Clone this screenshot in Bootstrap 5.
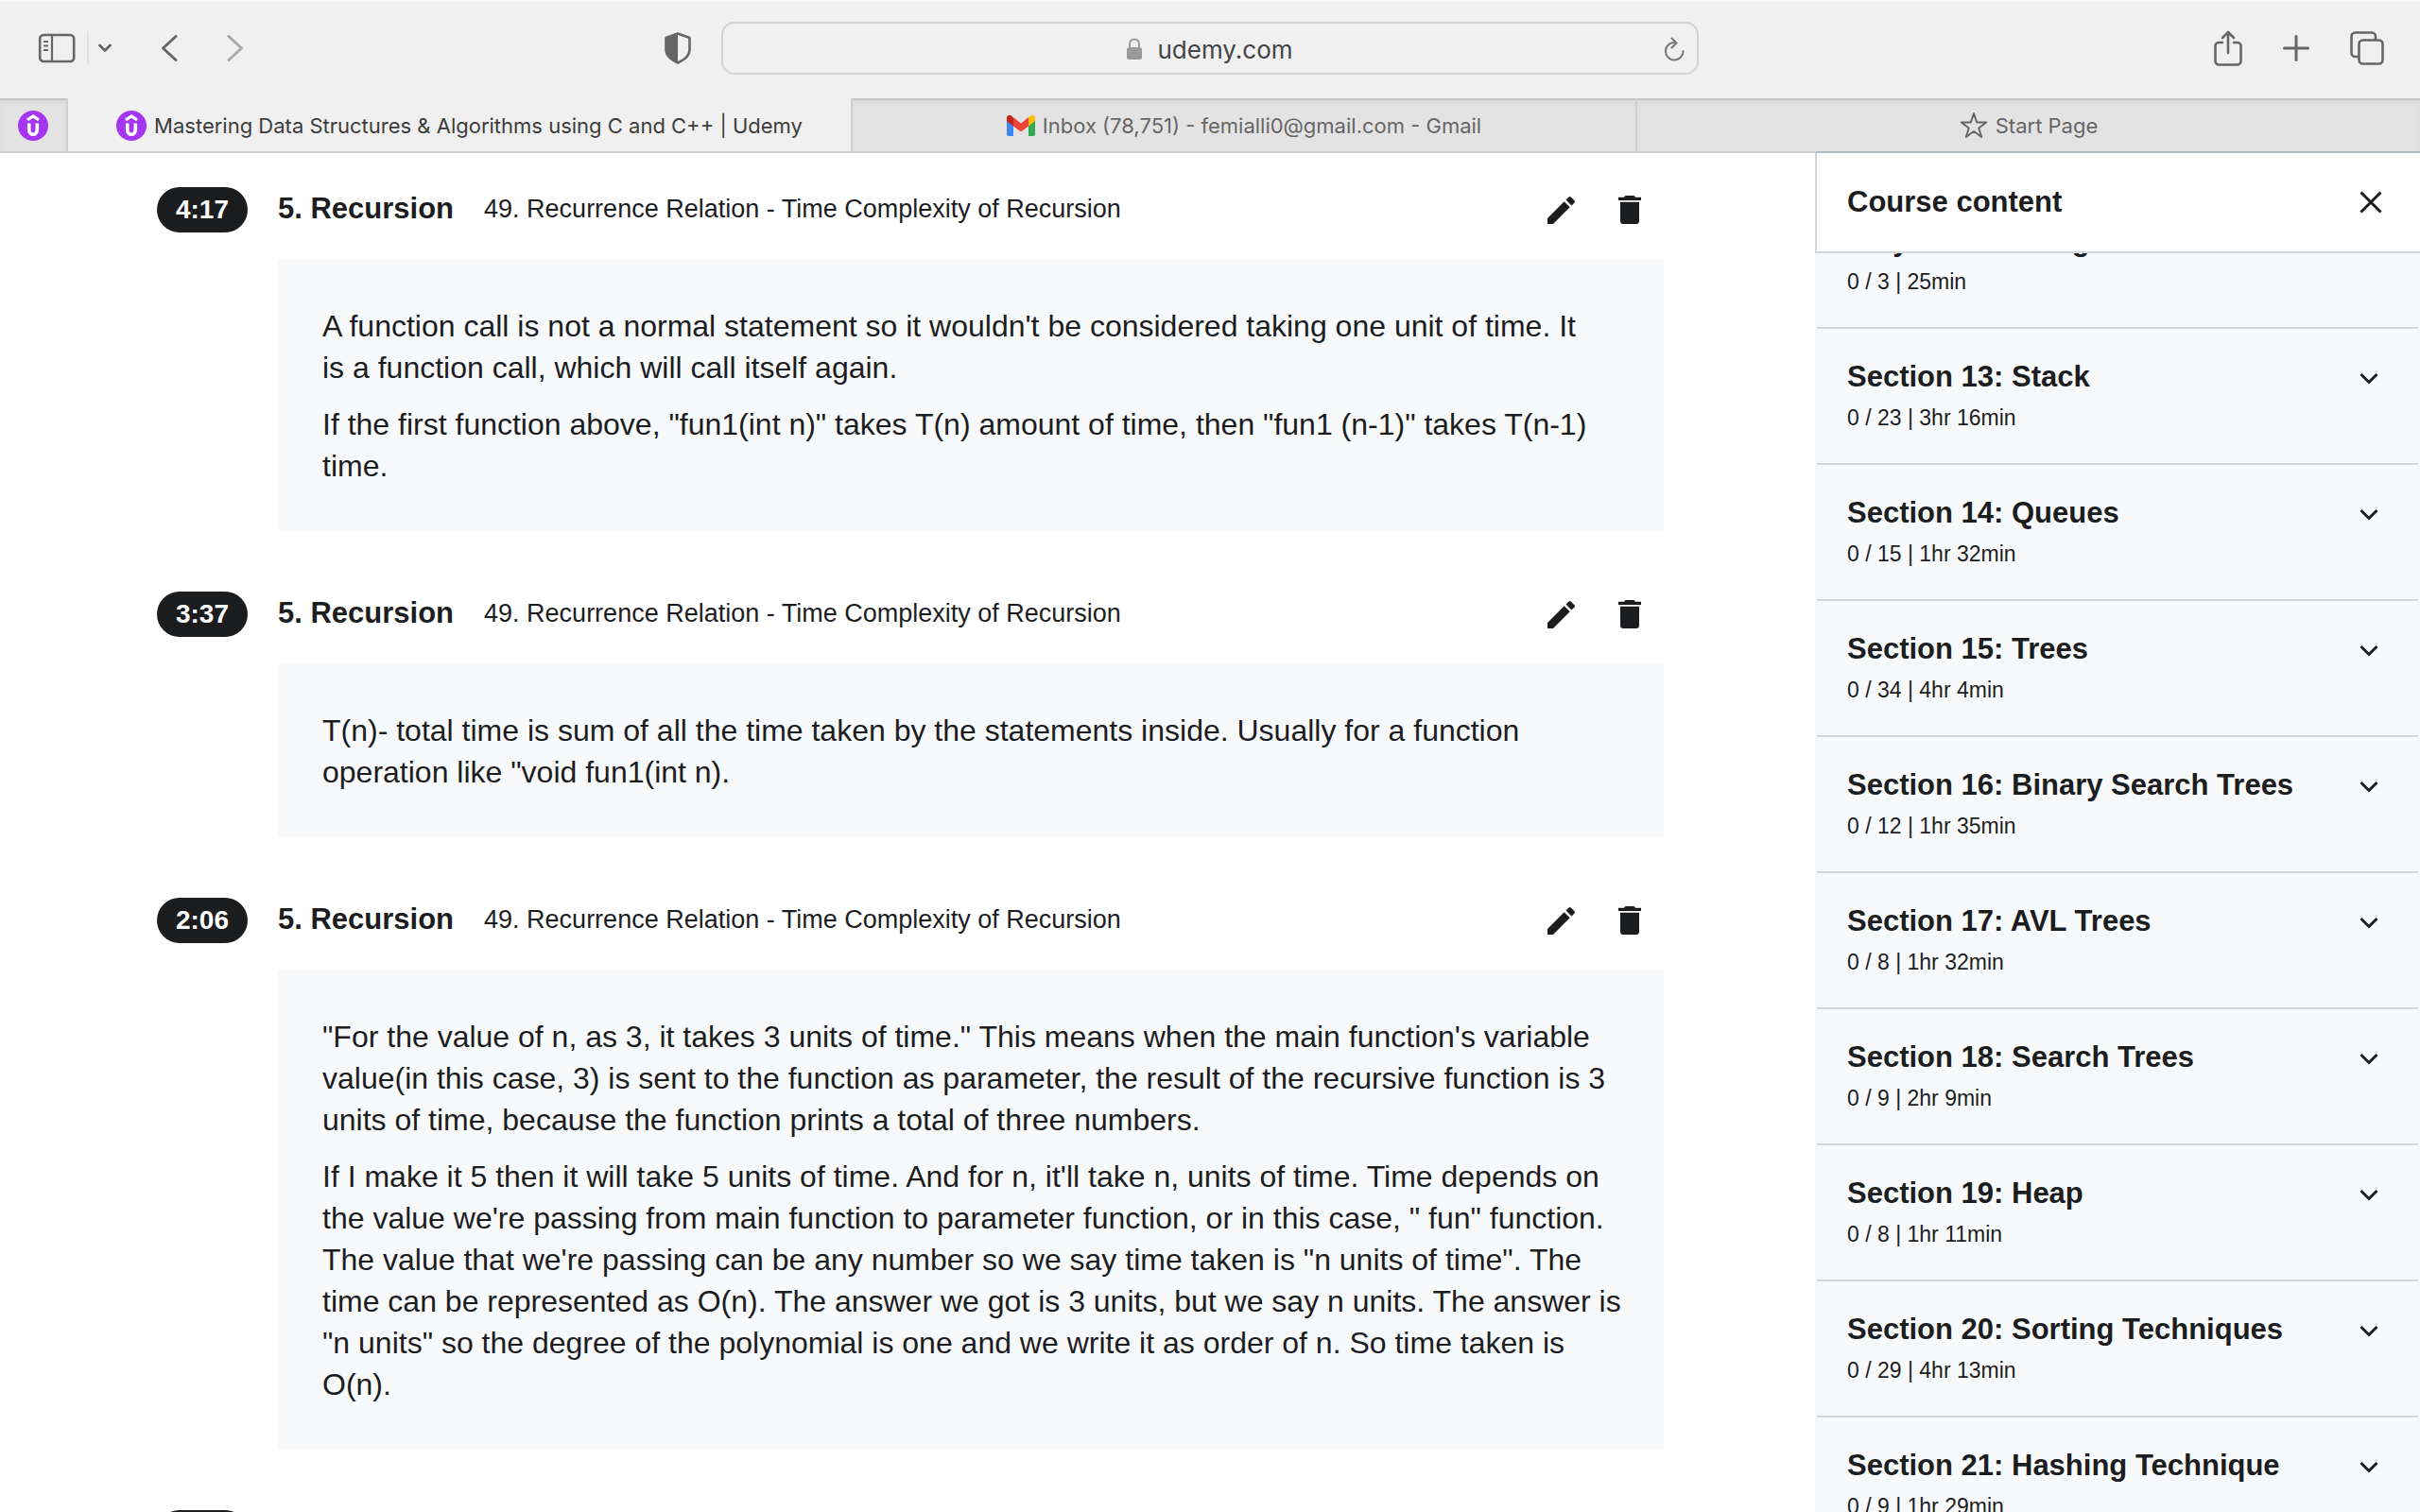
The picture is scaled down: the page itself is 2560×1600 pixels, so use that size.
<!DOCTYPE html>
<html lang="en">
<head>
<meta charset="utf-8">
<meta name="viewport" content="width=device-width, initial-scale=1">
<title>Mastering Data Structures &amp; Algorithms using C and C++ | Udemy</title>
<link href="https://cdn.jsdelivr.net/npm/bootstrap@5.3.0/dist/css/bootstrap.min.css" rel="stylesheet">
<style>
  body { font-family: "Liberation Sans", Arial, sans-serif; color: #1c1d1f; background: #fff; }
  .chrome-ui { font-family: Inter, Roboto, sans-serif; background: #f0f0f0; color: #404040; }
  .icon-btn { display: inline-flex; align-items: center; justify-content: center; padding: 0; border: 0; background: none; color: inherit; }
  .toolbar { height: 104px; padding: 0 38px 4px; border-top: 2px solid #f8f8f8; color: #666; }
  .toolbar-side { flex: 1 1 0; }
  .toolbar-split { width: 2px; height: 36px; margin: 0 10px 0 12px; background: #e0e0e0; }
  .nav-arrow { margin-left: 51px; }
  .shield-btn { margin-right: 32px; }
  .toolbar-end { gap: 43px; }
  .address { width: 1034px; height: 56px; border: 2px solid #d2d2d2; border-radius: 14px; padding: 2px 12px 0 36px; font-size: 26px; color: #444; }
  .tabs { height: 58px; border-bottom: 2px solid #d2d2d2; font-size: 22px; line-height: 28px; }
  .tab { padding-top: 2px; color: #666; text-decoration: none; background: #e3e3e3; box-shadow: inset 0 2px 0 #c4c4c4, inset 0 5px 4px #d9d9d9; border-right: 2px solid #cfcfcf; }
  .tab:last-child { border-right: 0; }
  .tab-pinned { width: 72px; }
  .tab-active { background: #f0f0f0; color: #3c3c3c; box-shadow: none; }
  .page-area { margin-top: -2px; }
  .notes { padding: 38px 160px 0 166px; }
  .note { margin-bottom: 64px; }
  .note-head { height: 48px; margin-bottom: 28px; }
  .note-time { width: 96px; height: 48px; margin-right: 32px; font-size: 28px; line-height: 48px; background: #1c1d1f; color: #fff; font-weight: 700; text-align: center; }
  .note-section { font-size: 31px; line-height: 46px; font-weight: 700; margin-right: 32px; }
  .note-lecture { font-size: 27px; line-height: 46px; }
  .note-actions { gap: 36px; padding-right: 16px; fill: currentColor; }
  .note-body { margin-left: 128px; padding: 49px 0 47px 47px; background: #f8f9fb; font-size: 32px; line-height: 44px; white-space: nowrap; }
  .note-body p { margin: 0 0 16px; }
  .note-body p:last-child { margin: 0; }
  .course { background: #f8f9fb; }
  .course-head { height: 108px; padding: 0 40px 0 32px; border: 2px solid #d1d7dc; border-right: 0; border-top-color: #b4bcc2; background: #fff; z-index: 1; }
  .course-head h2, .section-name { font-size: 31px; line-height: 38px; font-weight: 700; margin: 0; }
  .course-list { margin: -64px 2px 0; }
  .section-row { width: 100%; display: flex; justify-content: space-between; text-align: left; padding: 32px 42px 34px 32px; border: 0; border-bottom: 2px solid #d1d7dc; background: none; color: inherit; }
  .section-meta { font-size: 23px; line-height: 28px; margin-top: 10px; display: block; }
  .section-name { display: block; }
  .section-row svg { margin-top: 10px; flex: none; }
</style>
<script src="https://cdn.jsdelivr.net/npm/bootstrap@5.3.0/dist/js/bootstrap.bundle.min.js"></script>
</head>
<body>
<svg class="d-none">
  <symbol id="udemy" viewBox="0 0 32 32"><circle cx="16" cy="16" r="16" fill="#a435f0"/><path d="M10 9.800 16 6l6 3.800" fill="none" stroke="#fff" stroke-width="3.200"/><path d="M11.700 13.500v6.500c0 7 8.600 7 8.600 0v-6.500" fill="none" stroke="#fff" stroke-width="3.600"/></symbol>
  <symbol id="pencil" viewBox="0 0 32 32"><path d="M1 25v6h6L24.700 13.300l-6-6zM29.500 8.500c.7-.7.700-1.600 0-2.300l-3.700-3.700c-.7-.7-1.600-.7-2.300 0l-3 3 6 6z"/></symbol>
  <symbol id="trash" viewBox="0 0 24 30"><path d="M7.500 0h9l1.500 1.700h6V5H0V1.700h6zM2 6.700h20V27c0 1.700-1.300 3-3 3H5c-1.700 0-3-1.300-3-3z"/></symbol>
  <symbol id="chev" viewBox="0 0 20 13"><path d="m1.500 2.500 8.500 8.500 8.500-8.500" fill="none" stroke="currentColor" stroke-width="3"/></symbol>
</svg>
<div class="d-flex flex-column vh-100 overflow-hidden">
  <header class="chrome-ui flex-shrink-0">
    <div class="toolbar d-flex align-items-center">
      <div class="toolbar-side d-flex align-items-center">
        <button class="icon-btn" aria-label="Sidebar"><svg width="42" height="32" viewBox="-2 0 42 32" fill="none" stroke="currentColor" stroke-width="2.600"><rect x="2.200" y="2" width="36" height="28" rx="4"/><path d="M15 2v28M6 9h5M6 13.500h5M6 18h5" stroke-width="2.200"/></svg></button>
        <span class="toolbar-split"></span>
        <button class="icon-btn" aria-label="Tab groups"><svg width="14" height="10" viewBox="0 0 14 10" fill="none" stroke="currentColor" stroke-width="2.800" stroke-linecap="round" stroke-linejoin="round"><path d="m1.500 2 5.500 5.500L12.500 2"/></svg></button>
        <button class="icon-btn nav-arrow" aria-label="Back"><svg width="20" height="28" viewBox="0 0 20 28" fill="none" stroke="currentColor" stroke-width="3" stroke-linecap="round" stroke-linejoin="round"><path d="M17 1.500 3.500 14 17 26.500"/></svg></button>
        <button class="icon-btn nav-arrow opacity-50" aria-label="Forward"><svg width="20" height="28" viewBox="0 0 20 28" fill="none" stroke="currentColor" stroke-width="3" stroke-linecap="round" stroke-linejoin="round"><path d="M2 1.500 15.500 14 2 26.500"/></svg></button>
        <button class="icon-btn ms-auto shield-btn" aria-label="Privacy report"><svg width="28" height="34" viewBox="0 0 28 34"><path d="M14 1.500 26.500 6v13c0 6-6 10.500-12.500 13.500C7.500 29.500 1.500 25 1.500 19V6z" fill="none" stroke="currentColor" stroke-width="2.600" stroke-linejoin="round"/><path d="M14 1.500V32.500C7.500 29.500 1.500 25 1.500 19V6z" fill="currentColor"/></svg></button>
      </div>
      <div class="address d-flex align-items-center">
        <span class="mx-auto d-flex align-items-center gap-3"><svg width="16" height="24" viewBox="0 0 16 24"><rect y="10" width="16" height="13" rx="2.500" fill="#999"/><path d="M3 11V7c0-7.500 10-7.500 10 0v4" fill="none" stroke="#999" stroke-width="2"/></svg>udemy.com</span>
        <button class="icon-btn" aria-label="Reload"><svg width="24" height="26" viewBox="0 0 24 26" fill="none" stroke="#777" stroke-width="2" stroke-linecap="round" stroke-linejoin="round"><path d="M13.500 6A9.300 9.300 0 1 0 21.500 15M9.500 1.500l5 5-5 5"/></svg></button>
      </div>
      <div class="toolbar-side toolbar-end d-flex align-items-center justify-content-end">
        <button class="icon-btn" aria-label="Share"><svg width="30" height="38" viewBox="0 0 30 38" fill="none" stroke="currentColor" stroke-width="2.600" stroke-linecap="round" stroke-linejoin="round"><path d="M9 13H5.500c-2.200 0-4 1.500-4 3.500V32.500c0 2.200 1.800 4 4 4h19c2.200 0 4-1.800 4-4V16.500c0-2-1.800-3.500-4-3.500H21M15 24V2M9 8l6-6 6 6"/></svg></button>
        <button class="icon-btn" aria-label="New tab"><svg width="28" height="28" viewBox="0 0 28 28" stroke="currentColor" stroke-width="3" stroke-linecap="round"><path d="M14 1.500v25M1.500 14h25"/></svg></button>
        <button class="icon-btn" aria-label="Tab overview"><svg width="36" height="36" viewBox="0 0 36 36" fill="none" stroke="currentColor" stroke-width="2.600"><rect x="9.500" y="9.500" width="25" height="25" rx="4"/><path d="M9.500 27H5.500c-2.200 0-4-1.800-4-4V5.500c0-2.200 1.800-4 4-4H23c2.200 0 4 1.800 4 4v4"/></svg></button>
      </div>
    </div>
    <nav class="tabs d-flex">
      <a href="#" class="tab tab-pinned d-flex align-items-center justify-content-center" aria-label="Udemy"><svg width="32" height="32"><use href="#udemy"/></svg></a>
      <a href="#" class="tab tab-active col d-flex align-items-center justify-content-center gap-2"><svg width="32" height="32"><use href="#udemy"/></svg>Mastering Data Structures &amp; Algorithms using C and C++ | Udemy</a>
      <a href="#" class="tab col d-flex align-items-center justify-content-center gap-2"><svg width="30" height="22" viewBox="0 0 30 22"><path d="M0 3v17c0 1.100.9 2 2 2h5V9z" fill="#4285f4"/><path d="M30 3v17c0 1.100-.9 2-2 2h-5V9z" fill="#34a853"/><path d="M7 2.500v9L0 6V3c0-2.800 3-4 5-2.300z" fill="#c5221f"/><path d="M23 2.500v9L30 6V3c0-2.800-3-4-5-2.300z" fill="#fbbc04"/><path d="M7 2.200 15 8.500l8-6.300v9.300l-8 6-8-6z" fill="#ea4335"/></svg>Inbox (78,751) - femialli0@gmail.com - Gmail</a>
      <a href="#" class="tab col d-flex align-items-center justify-content-center gap-2"><svg width="30" height="30" viewBox="0 0 30 30"><path d="m15 2 3.200 9.500h10l-8 6 3 9.500L15 21l-8.200 6 3-9.500-8-6h10z" fill="none" stroke="currentColor" stroke-width="2" stroke-linejoin="round"/></svg>Start Page</a>
    </nav>
  </header>
  <div class="page-area row g-0 flex-grow-1 overflow-hidden position-relative">
    <main class="col-9 notes">
      <article class="note">
        <div class="note-head d-flex align-items-start"><span class="note-time rounded-pill">4:17</span><span class="note-section">5. Recursion</span><span class="note-lecture">49. Recurrence Relation - Time Complexity of Recursion</span>
          <div class="note-actions ms-auto d-flex align-self-center"><button class="icon-btn" aria-label="Edit"><svg width="32" height="32"><use href="#pencil"/></svg></button><button class="icon-btn" aria-label="Delete"><svg width="40" height="30"><use href="#trash"/></svg></button></div></div>
        <div class="note-body"><p>A function call is not a normal statement so it wouldn't be considered taking one unit of time. It<br>is a function call, which will call itself again.</p><p>If the first function above, "fun1(int n)" takes T(n) amount of time, then "fun1 (n-1)" takes T(n-1)<br>time.</p></div>
      </article>
      <article class="note">
        <div class="note-head d-flex align-items-start"><span class="note-time rounded-pill">3:37</span><span class="note-section">5. Recursion</span><span class="note-lecture">49. Recurrence Relation - Time Complexity of Recursion</span>
          <div class="note-actions ms-auto d-flex align-self-center"><button class="icon-btn" aria-label="Edit"><svg width="32" height="32"><use href="#pencil"/></svg></button><button class="icon-btn" aria-label="Delete"><svg width="40" height="30"><use href="#trash"/></svg></button></div></div>
        <div class="note-body"><p>T(n)- total time is sum of all the time taken by the statements inside. Usually for a function<br>operation like "void fun1(int n).</p></div>
      </article>
      <article class="note">
        <div class="note-head d-flex align-items-start"><span class="note-time rounded-pill">2:06</span><span class="note-section">5. Recursion</span><span class="note-lecture">49. Recurrence Relation - Time Complexity of Recursion</span>
          <div class="note-actions ms-auto d-flex align-self-center"><button class="icon-btn" aria-label="Edit"><svg width="32" height="32"><use href="#pencil"/></svg></button><button class="icon-btn" aria-label="Delete"><svg width="40" height="30"><use href="#trash"/></svg></button></div></div>
        <div class="note-body"><p>"For the value of n, as 3, it takes 3 units of time." This means when the main function's variable<br>value(in this case, 3) is sent to the function as parameter, the result of the recursive function is 3<br>units of time, because the function prints a total of three numbers.</p><p>If I make it 5 then it will take 5 units of time. And for n, it'll take n, units of time. Time depends on<br>the value we're passing from main function to parameter function, or in this case, " fun" function.<br>The value that we're passing can be any number so we say time taken is "n units of time". The<br>time can be represented as O(n). The answer we got is 3 units, but we say n units. The answer is<br>"n units" so the degree of the polynomial is one and we write it as order of n. So time taken is<br>O(n).</p></div>
      </article>
      <div class="note-head d-flex"><span class="note-time rounded-pill"></span></div>
    </main>
    <aside class="col-3 course d-flex flex-column">
      <div class="course-head position-relative d-flex align-items-center justify-content-between flex-shrink-0"><h2>Course content</h2><button class="icon-btn" aria-label="Close"><svg width="24" height="24" viewBox="0 0 24 24" stroke="#1c1d1f" stroke-width="3"><path d="m1.500 1.500 21 21M22.500 1.500l-21 21"/></svg></button></div>
      <div class="course-list">
        <button class="section-row"><span><span class="section-name">Polynomial using Linked List</span><span class="section-meta">0 / 3 | 25min</span></span></button>
        <button class="section-row"><span><span class="section-name">Section 13: Stack</span><span class="section-meta">0 / 23 | 3hr 16min</span></span><svg width="20" height="20"><use href="#chev"/></svg></button>
        <button class="section-row"><span><span class="section-name">Section 14: Queues</span><span class="section-meta">0 / 15 | 1hr 32min</span></span><svg width="20" height="20"><use href="#chev"/></svg></button>
        <button class="section-row"><span><span class="section-name">Section 15: Trees</span><span class="section-meta">0 / 34 | 4hr 4min</span></span><svg width="20" height="20"><use href="#chev"/></svg></button>
        <button class="section-row"><span><span class="section-name">Section 16: Binary Search Trees</span><span class="section-meta">0 / 12 | 1hr 35min</span></span><svg width="20" height="20"><use href="#chev"/></svg></button>
        <button class="section-row"><span><span class="section-name">Section 17: AVL Trees</span><span class="section-meta">0 / 8 | 1hr 32min</span></span><svg width="20" height="20"><use href="#chev"/></svg></button>
        <button class="section-row"><span><span class="section-name">Section 18: Search Trees</span><span class="section-meta">0 / 9 | 2hr 9min</span></span><svg width="20" height="20"><use href="#chev"/></svg></button>
        <button class="section-row"><span><span class="section-name">Section 19: Heap</span><span class="section-meta">0 / 8 | 1hr 11min</span></span><svg width="20" height="20"><use href="#chev"/></svg></button>
        <button class="section-row"><span><span class="section-name">Section 20: Sorting Techniques</span><span class="section-meta">0 / 29 | 4hr 13min</span></span><svg width="20" height="20"><use href="#chev"/></svg></button>
        <button class="section-row"><span><span class="section-name">Section 21: Hashing Technique</span><span class="section-meta">0 / 9 | 1hr 29min</span></span><svg width="20" height="20"><use href="#chev"/></svg></button>
      </div>
    </aside>
  </div>
</div>
</body>
</html>
